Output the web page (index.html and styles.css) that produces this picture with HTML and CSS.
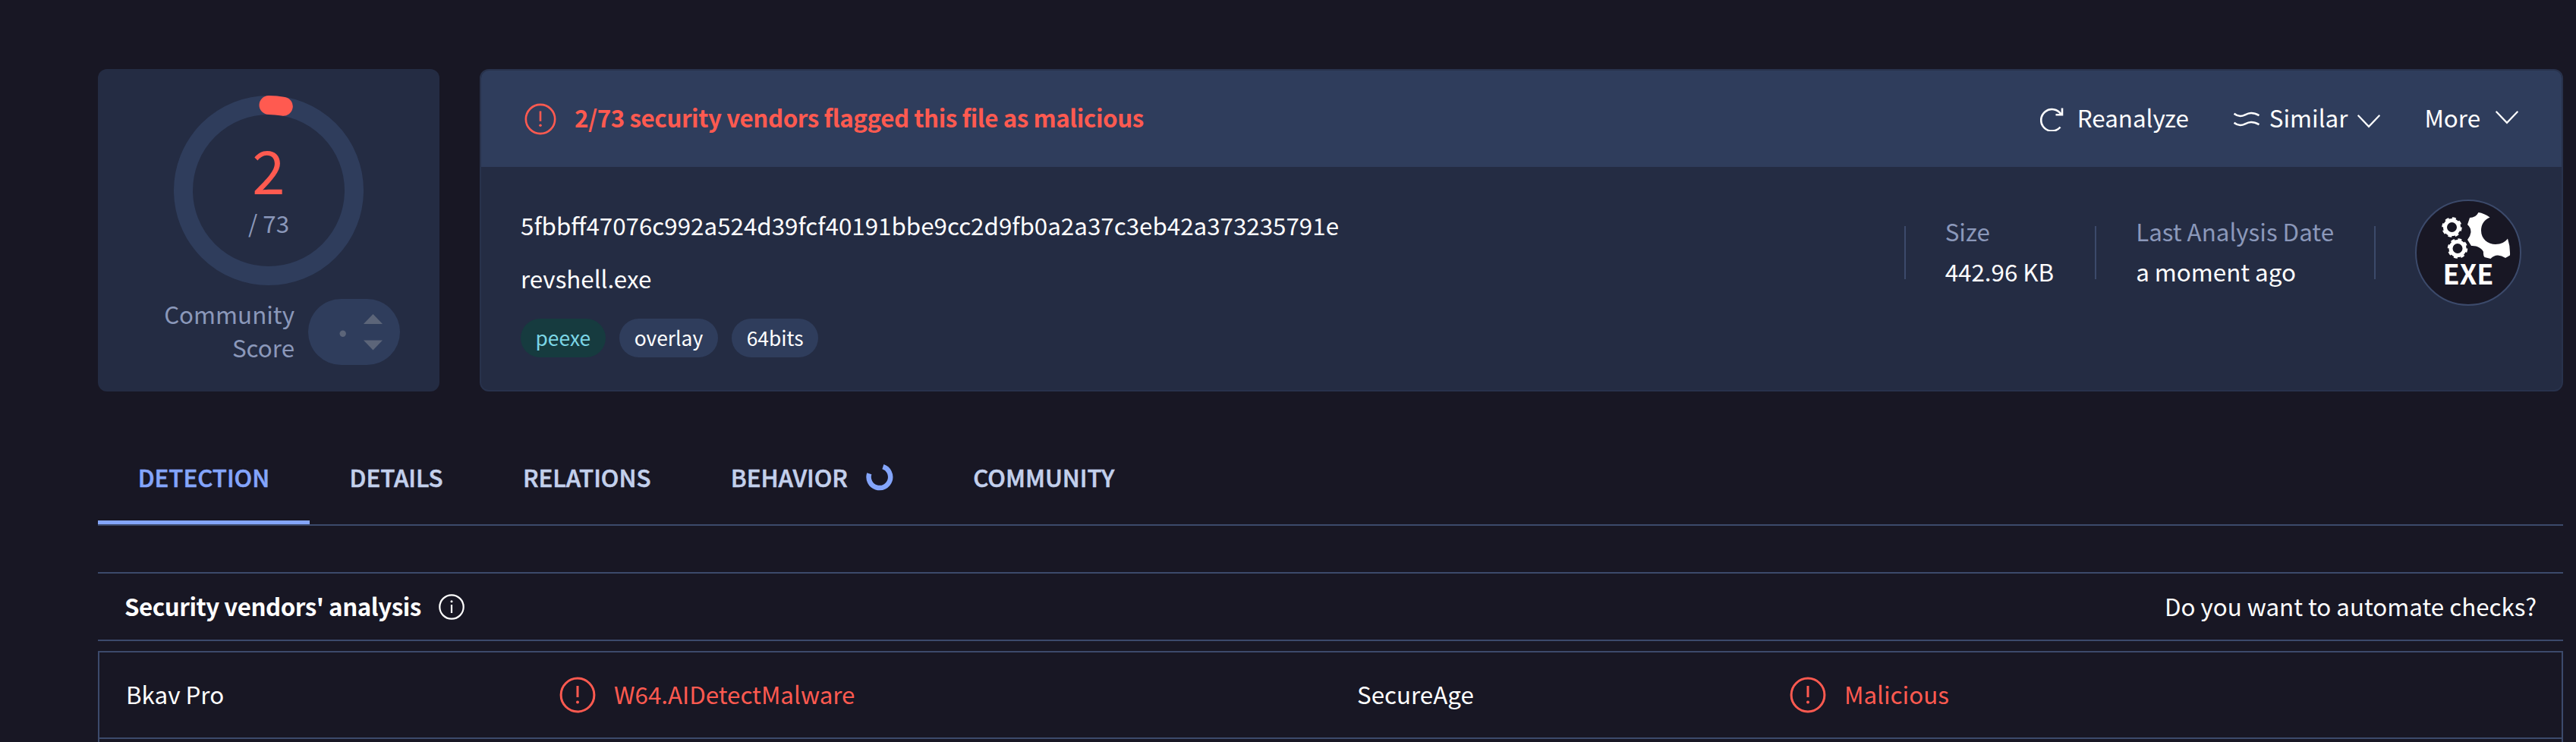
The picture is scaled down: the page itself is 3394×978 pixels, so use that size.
FILE: index.html
```html
<!DOCTYPE html>
<html lang="en">
<head>
<meta charset="utf-8">
<title>revshell.exe</title>
<link rel="stylesheet" href="styles.css">
</head>
<body>
<svg class="defs" width="0" height="0" aria-hidden="true">
  <symbol id="alert" viewBox="0 0 48 48"><circle cx="24" cy="24" r="21.9" fill="none" stroke="currentColor" stroke-width="3"/><path d="M24 12v15" stroke="currentColor" stroke-width="3"/><circle cx="24" cy="33.5" r="2" fill="currentColor"/></symbol>
  <symbol id="chevron" viewBox="0 0 30 18"><path d="M1.3 1.5 15 15.8 28.7 1.5" fill="none" stroke="currentColor" stroke-width="2.2" stroke-linecap="round"/></symbol>
</svg>
<main class="page">
  <section class="summary">
    <div class="card score">
      <div class="ring">
        <svg class="ring-art" viewBox="0 0 250 250"><circle cx="125" cy="125" r="112.5" fill="none" stroke="#2f3d5c" stroke-width="25"/><path d="M125 12.5A112.5 112.5 0 0 1 144.3 14.2" fill="none" stroke="#ff5a50" stroke-width="25" stroke-linecap="round"/></svg>
        <div class="ring-text"><span class="hits">2</span><span class="total">/ 73</span></div>
      </div>
      <div class="community">
        <span class="community-label">Community<br>Score</span>
        <svg class="vote" viewBox="0 0 121 87"><rect width="121" height="87" rx="43.5" fill="#2f3d5c"/><g fill="#5c6579"><circle cx="45.7" cy="45.7" r="4.2"/><path d="M73 33 85.5 20 98 33zM73 54.500h25L85.500 67.500z"/></g></svg>
      </div>
    </div>
    <div class="card file">
      <header class="file-head">
        <svg class="flag-icon"><use href="#alert"/></svg>
        <strong class="flag-text">2/73 security vendors flagged this file as malicious</strong>
        <div class="action reanalyze">
          <svg class="icon-re" viewBox="0 0 32 32"><path d="M26.500 26.500A14.300 14.300 0 1 1 27.500 9.500M29 1.500v8.700H20.500" fill="none" stroke="currentColor" stroke-width="2.600"/></svg>
          <span class="label">Reanalyze</span>
        </div>
        <div class="action similar">
          <svg class="icon-sim" viewBox="0 0 34 20"><path d="M.5 2.800C5 6.500 10 6.800 15 4.300S25 .500 33.500 5.200M.5 14.800C5 18.500 10 18.800 15 16.300S25 12.500 33.500 17.200" fill="none" stroke="currentColor" stroke-width="2.600"/></svg>
          <span class="label">Similar</span>
          <svg class="chev"><use href="#chevron"/></svg>
        </div>
        <div class="action more"><span class="label">More</span><svg class="chev"><use href="#chevron"/></svg></div>
      </header>
      <div class="file-body">
        <div class="identity">
          <div class="hash">5fbbff47076c992a524d39fcf40191bbe9cc2d9fb0a2a37c3eb42a373235791e</div>
          <div class="name">revshell.exe</div>
          <div class="tags"><span class="tag green">peexe</span><span class="tag">overlay</span><span class="tag">64bits</span></div>
        </div>
        <dl class="meta size"><dt>Size</dt><dd>442.96 KB</dd></dl>
        <dl class="meta date"><dt>Last Analysis Date</dt><dd>a moment ago</dd></dl>
        <div class="type">
          <svg viewBox="0 0 140 140"><circle cx="70" cy="70" r="69" fill="#181724" stroke="#3c4a6b" stroke-width="2"/>
            <g fill="none" stroke="#fff"><circle cx="48.500" cy="36.500" r="9" stroke-width="5"/><circle cx="48.500" cy="36.500" r="12" stroke-width="2.500" stroke-dasharray="5 4.420"/><circle cx="56" cy="64.500" r="9" stroke-width="5"/><circle cx="56" cy="64.500" r="12" stroke-width="2.500" stroke-dasharray="5 4.420"/></g>
            <path fill="#fff" d="M83.500 17Q91 18 98.500 23.500C90 27 87 34 87 41C87 52 96 59 106 59C113 59 119 56 122 51.500Q125.500 62 125 73.500L119 77Q114 73.500 109 73.500Q103.500 73.500 99.500 78L91.500 76Q89.500 73.500 90 69C88 64 81 60.500 74 61L69 53Q73 48 73.500 43Q73.500 37 69 33L72 24Q80 24 83.500 17z"/>
            <text x="70" y="112" text-anchor="middle" class="exe">EXE</text></svg>
        </div>
      </div>
    </div>
  </section>
  <nav class="tabs">
    <a class="tab active">DETECTION</a><a class="tab">DETAILS</a><a class="tab">RELATIONS</a>
    <a class="tab">BEHAVIOR<svg class="spinner" viewBox="0 0 36 36"><path d="M22.400 4.200A14.300 14.300 0 1 1 4.300 13.300" fill="none" stroke="currentColor" stroke-width="6.500"/></svg></a>
    <a class="tab">COMMUNITY</a>
  </nav>
  <section class="vendors">
    <header class="vendors-head">
      <h2>Security vendors' analysis</h2>
      <svg class="info" viewBox="0 0 34 34"><circle cx="17" cy="17" r="15.700" fill="none" stroke="currentColor" stroke-width="2.200"/><path d="M17 14v11" stroke="currentColor" stroke-width="2.200"/><circle cx="17" cy="9.800" r="1.500" fill="currentColor"/></svg>
      <span class="automate">Do you want to automate checks?</span>
    </header>
    <div class="table">
      <div class="row">
        <div class="vendor">Bkav Pro</div><div class="result"><svg><use href="#alert"/></svg><span class="verdict">W64.AIDetectMalware</span></div>
        <div class="vendor">SecureAge</div><div class="result"><svg><use href="#alert"/></svg><span class="verdict">Malicious</span></div>
      </div>
    </div>
  </section>
</main>
</body>
</html>
```
FILE: styles.css
```css
* { box-sizing: border-box; }
body {
  margin: 0;
  height: 978px;
  overflow: hidden;
  background: #181724;
  color: #fff;
  font: 400 31.33px/44px "Noto Sans CJK SC", "Noto Sans", sans-serif;
  white-space: nowrap;
}
svg { display: block; flex: none; }
.defs { position: absolute; }
.page { padding: 91px 17px 0 129px; }
.summary { display: grid; grid-template-columns: 450px 1fr; gap: 53px; height: 425px; }
.card { background: #242c43; border-radius: 12px; }
.score { color: #8b98ba; padding-top: 35px; }
.ring { display: grid; width: 250px; height: 250px; margin: 0 auto; }
.ring-art, .ring-text { grid-area: 1 / 1; }
.ring-text { display: flex; flex-direction: column; align-items: center; padding-top: 57px; }
.hits { font-size: 78px; line-height: 78px; color: #ff5a50; }
.total { line-height: 44px; margin-top: 11px; }
.community { display: flex; justify-content: flex-end; gap: 18px; margin: 15px 52px 0 0; }
.community-label { margin-top: 1px; text-align: right; line-height: 44px; }
.vote { width: 121px; height: 87px; margin-top: 3px; }

.file { border: 2px solid #28324c; overflow: hidden; }
.file-head { display: flex; align-items: center; height: 127px; padding: 0 57px; background: #2f3d5c; }
.flag-icon { width: 42px; height: 42px; color: #ff5a50; }
.flag-text { margin-left: 24px; margin-right: auto; padding-bottom: 3px; color: #ff5a50; font-weight: 700; letter-spacing: -0.44px; }
.action { display: flex; align-items: center; }
.label { padding-bottom: 3px; }
.icon-re { width: 32px; height: 32px; margin-right: 17px; }
.icon-sim { width: 34px; height: 20px; margin-right: 13px; }
.chev { width: 30px; height: 18px; }
.similar { margin-left: 59px; }
.similar .chev { margin: 6px 0 0 13px; }
.more { margin-left: 58px; }
.more .chev { margin: -4px 0 0 20px; }
.file-body { display: flex; padding: 0 53px 0 52px; }
.identity { flex: 1; padding-top: 55px; }
.name { margin-top: 26px; }
.tags { display: flex; gap: 18.5px; margin-top: 31px; font-size: 26.4px; line-height: 50px; }
.tag { border-radius: 26px; padding: 0 19.5px; height: 51px; background: #2f3d5c; }
.green { background: #163b3f; color: #7cd6e6; }
.meta { position: relative; height: 140px; margin: 42px 0 0; padding: 21px 54px 0; }
.meta::before, .date::after { content: ""; position: absolute; top: 36px; left: 0; width: 2px; height: 70px; background: #3c4a6b; }
.date { padding-right: 55px; }
.date::after { left: auto; right: 0; }
.meta dt { color: #8b98ba; }
.meta dd { margin: 9px 0 0; }
.type { width: 140px; height: 140px; margin: 43px 0 0 52px; }
.exe { font: 700 36px "Noto Sans CJK SC", sans-serif; fill: #fff; }

.tabs { display: flex; height: 114px; margin-top: 63px; border-bottom: 2px solid #3c4a6b; font-weight: 500; color: #c3d0ec; -webkit-text-stroke: 0.6px currentColor; }
.tab { display: flex; align-items: center; height: 112px; padding: 0 52.7px 13px; letter-spacing: -0.03px; }
.active { color: #84a5fb; box-shadow: inset 0 -5px #84a5fb; }
.spinner { width: 36px; height: 36px; margin-left: 24px; color: #84a5fb; }
.vendors { margin-top: 61px; }
.vendors-head { display: flex; align-items: center; height: 91px; padding: 0 35px; border: solid #3c4a6b; border-width: 2px 0; }
.vendors-head h2 { margin: 0; padding-bottom: 2px; font-size: inherit; font-weight: 700; letter-spacing: -0.48px; }
.info { width: 34px; height: 34px; margin-left: 23px; }
.automate { margin-left: auto; padding-bottom: 2px; }
.table { margin-top: 13px; height: 140px; border: 2px solid #3c4a6b; }
.row { display: grid; grid-template-columns: 571px 1051px 570px 1fr; height: 114px; padding-left: 35px; align-items: center; border-bottom: 2px solid #3c4a6b; }
.vendor, .verdict { padding-bottom: 3px; }
.result { display: flex; align-items: center; gap: 24px; color: #ff5a50; }
.result svg { width: 48px; height: 48px; }
```
